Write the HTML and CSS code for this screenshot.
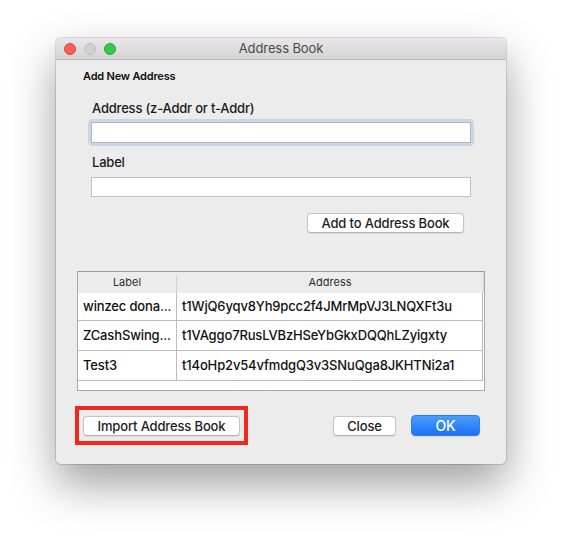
FILE: index.html
```html
<!DOCTYPE html>
<html>
<head>
<meta charset="utf-8">
<link rel="stylesheet" href="styles.css">
</head>
<body>
<div class="stage">
  <div class="window">
    <div class="titlebar">
      <div class="lights">
        <span class="light red"></span>
        <span class="light gray"></span>
        <span class="light green"></span>
      </div>
      <div class="title">Address Book</div>
    </div>
    <div class="section-title">Add New Address</div>
    <div class="form">
      <div class="field-label first">Address (z-Addr or t-Addr)</div>
      <div class="focus-ring"><input class="text-input" type="text"></div>
      <div class="field-label second">Label</div>
      <input class="text-input plain" type="text">
      <div class="add-row"><button class="btn add-btn">Add to Address Book</button></div>
    </div>
    <div class="table">
      <div class="thead">
        <div class="th">Label</div>
        <div class="th sep">Address</div>
      </div>
      <div class="tbody">
        <div class="tr"><div class="td">winzec dona...</div><div class="td addr">t1WjQ6yqv8Yh9pcc2f4JMrMpVJ3LNQXFt3u</div></div>
        <div class="tr"><div class="td">ZCashSwing...</div><div class="td addr">t1VAggo7RusLVBzHSeYbGkxDQQhLZyigxty</div></div>
        <div class="tr"><div class="td">Test3</div><div class="td addr">t14oHp2v54vfmdgQ3v3SNuQga8JKHTNi2a1</div></div>
      </div>
    </div>
    <div class="footer">
      <div class="highlight"><button class="btn import-btn">Import Address Book</button></div>
      <button class="btn close-btn">Close</button>
      <button class="btn ok-btn">OK</button>
    </div>
  </div>
</div>
</body>
</html>
```
FILE: styles.css
```css
* { box-sizing: border-box; }
html, body { margin: 0; padding: 0; background: #ffffff; }
body {
  width: 562px;
  height: 538px;
  overflow: hidden;
  font-family: Inter, "Noto Sans", "Liberation Sans", sans-serif;
  color: #1c1c1c;
}
.stage {
  padding: 38px 0 0 56px;
}
.window {
  width: 450px;
  height: 426px;
  background: #ececec;
  border-radius: 5px;
  box-shadow: 0 0 0 1px rgba(0,0,0,0.12), 0 20px 45px rgba(0,0,0,0.38);
  overflow: hidden;
  display: flex;
  flex-direction: column;
}
.titlebar {
  height: 22px;
  flex: none;
  background: linear-gradient(#e9e7e9, #d5d4d5);
  border-bottom: 1px solid #b9b8b9;
  display: flex;
  align-items: center;
  position: relative;
}
.lights {
  display: flex;
  gap: 8px;
  padding-left: 8px;
}
.light {
  width: 12px;
  height: 12px;
  border-radius: 50%;
}
.light.red { background: #fc5d57; border: 0.5px solid #e1443e; }
.light.gray { background: #d1d0d1; border: 0.5px solid #bdbcbd; }
.light.green { background: #35c84a; border: 0.5px solid #27aa36; }
.title {
  position: absolute;
  left: 0;
  right: 0;
  top: 0;
  line-height: 21px;
  text-align: center;
  font-size: 13px;
  letter-spacing: -0.1px;
  color: #4b4b4b;
}
.section-title {
  margin-top: 9px;
  padding-left: 27px;
  font-size: 11px;
  line-height: 14px;
  font-weight: 600;
  letter-spacing: -0.2px;
  color: #111;
}
.form {
  padding: 0 35px;
  display: flex;
  flex-direction: column;
}
.field-label {
  font-size: 13px;
  line-height: 16px;
  font-weight: 500;
  letter-spacing: -0.2px;
  padding-left: 1px;
  color: #1a1a1a;
}
.field-label.first { margin-top: 17px; }
.field-label.second { margin-top: 8px; }
.focus-ring {
  margin: 3px -3px 0;
  padding: 2px;
  border: 1px solid #c6d5ea;
  background: #c9d7ec;
  border-radius: 4px;
}
.text-input {
  display: block;
  width: 100%;
  height: 21px;
  border: 1px solid #b3b3b3;
  background: #fff;
  margin: 0;
  padding: 0 3px;
  outline: none;
  font: inherit;
}
.text-input.plain {
  margin-top: 7px;
  height: 20px;
  border-color: #c2c2c2;
}
.add-row {
  display: flex;
  justify-content: flex-end;
  margin-top: 16px;
  padding-right: 7px;
}
.btn {
  font-family: inherit;
  font-size: 13px;
  font-weight: 500;
  letter-spacing: -0.15px;
  color: #1d1d1d;
  height: 20px;
  padding: 0;
  background: #fff;
  border: 1px solid #c6c6c6;
  border-bottom-color: #b4b4b4;
  border-radius: 4px;
  box-shadow: 0 0.5px 1px rgba(0,0,0,0.08);
  line-height: 18px;
}
.add-btn { width: 157px; }
.table {
  margin: 38px 21px 0;
  height: 120px;
  background: #fff;
  border: 1px solid #a9a9a9;
  border-top-color: #9c9c9c;
  display: flex;
  flex-direction: column;
}
.thead {
  height: 21px;
  flex: none;
  background: #ececec;
  display: grid;
  grid-template-columns: 98px 1fr;
  border-right: 1px solid #d6d6d6;
}
.th {
  font-size: 11px;
  line-height: 21px;
  text-align: center;
  color: #2e2e2e;
}
.th.sep {
  border-left: 1px solid #d2d2d2;
  margin: 3px 0 0;
  line-height: 15px;
}
.tbody {
  border-right: 1px solid #b7b7b7;
  margin-right: 1px;
}
.tr {
  display: grid;
  grid-template-columns: 98px 1fr;
  height: 30px;
  border-bottom: 1px solid #bdbdbd;
}
.tr:first-child { height: 28px; }
.td {
  font-size: 13px;
  font-weight: 500;
  letter-spacing: -0.15px;
  line-height: 28px;
  padding-left: 5px;
  color: #111;
  white-space: nowrap;
  overflow: hidden;
}
.tr:first-child .td { line-height: 27px; }
.td.addr {
  border-left: 1px solid #bdbdbd;
  padding-left: 5px;
}
.footer {
  margin-top: 15px;
  padding: 0 26px 0 19px;
  display: flex;
  align-items: center;
}
.highlight {
  border: 4px solid #f1281e;
  padding: 6px 4px 5px 4px;
}
.import-btn { width: 157px; display: block; }
.close-btn { width: 63px; margin-left: auto; }
.ok-btn {
  width: 69px;
  height: 21px;
  margin-left: 15px;
  color: #fff;
  border: 1px solid #2a7ef3;
  background: linear-gradient(#4b9dfc, #1c70f3);
  font-size: 14px;
}
```
